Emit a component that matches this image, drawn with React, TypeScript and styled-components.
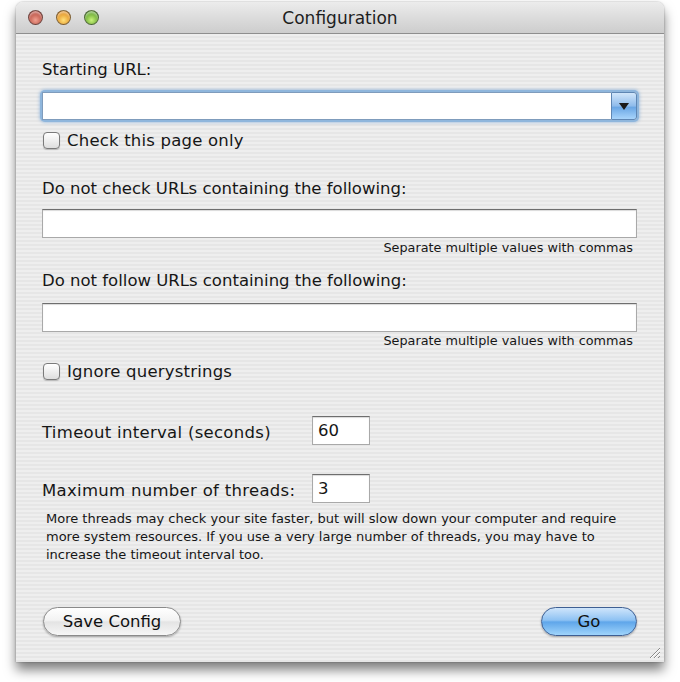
import * as React from "react";
import styled, { createGlobalStyle } from "styled-components";

const GlobalStyle = createGlobalStyle`
	html, body {
		margin: 0;
		padding: 0;
		background: #ffffff;
	}
	body {
		font-family: "DejaVu Sans", "Liberation Sans", sans-serif;
		color: #161616;
	}
`;

const StyledPage = styled.div`
	width: 680px;
	height: 682px;
	padding: 2px 16px 0;
	box-sizing: border-box;
`;

const StyledWindow = styled.div`
	width: 648px;
	height: 660px;
	border-radius: 7px 7px 0 0;
	overflow: hidden;
	display: flex;
	flex-direction: column;
	box-shadow: 0 8px 12px rgba(0, 0, 0, 0.5), 0 0 2px rgba(0, 0, 0, 0.35);
	background: repeating-linear-gradient(
		to bottom,
		#eeeeee 0px,
		#eeeeee 2px,
		#e6e6e6 2px,
		#e6e6e6 4px
	);
`;

const StyledTitleBar = styled.div`
	height: 31px;
	flex-shrink: 0;
	display: flex;
	align-items: center;
	position: relative;
	background: linear-gradient(to bottom, #ececec 0%, #dcdcdc 50%, #cdcdcd 100%);
	border-bottom: 1px solid #8e8e8e;
`;

const StyledLights = styled.div`
	display: flex;
	gap: 13px;
	padding-left: 12px;
`;

const StyledLight = styled.div<{ $c1: string; $c2: string }>`
	width: 15px;
	height: 15px;
	border-radius: 50%;
	box-sizing: border-box;
	border: 1px solid rgba(60, 60, 60, 0.6);
	background: radial-gradient(
		circle at 50% 70%,
		${(p) => p.$c1} 0%,
		${(p) => p.$c2} 75%
	);
	box-shadow: inset 0 2px 2px rgba(255, 255, 255, 0.5);
`;

const StyledTitle = styled.div`
	position: absolute;
	left: 0;
	right: 0;
	text-align: center;
	font-size: 17px;
	color: #1e1e1e;
	pointer-events: none;
`;

const StyledContent = styled.div`
	flex: 1;
	display: flex;
	flex-direction: column;
	padding: 26px 27px 0 26px;
	position: relative;
`;

const StyledLabel = styled.div<{ $mt: number }>`
	margin-top: ${(p) => p.$mt}px;
	height: 20px;
	line-height: 20px;
	font-size: 16.5px;
	white-space: nowrap;
`;

const StyledCombo = styled.div`
	margin-top: 12px;
	height: 28px;
	display: flex;
	box-sizing: border-box;
	border-radius: 3px;
	box-shadow: 0 0 0 2px #8fb6dc, 0 0 3px 3px rgba(120, 165, 215, 0.5);
`;

const StyledComboField = styled.div`
	flex: 1;
	background: #fff;
	border: 1px solid #7f9cbc;
	border-right: none;
`;

const StyledComboButton = styled.div`
	width: 24px;
	display: flex;
	align-items: center;
	justify-content: center;
	border-radius: 0 3px 3px 0;
	border: 1px solid #5f86b3;
	background: linear-gradient(to bottom, #d2e6fa 0%, #8ebbeb 50%, #6aa6e4 55%, #a8d4fb 100%);
`;

const StyledArrow = styled.div`
	width: 0;
	height: 0;
	border-left: 5px solid transparent;
	border-right: 5px solid transparent;
	border-top: 7px solid #1a1a1a;
`;

const StyledCheckRow = styled.div<{ $mt: number }>`
	margin-top: ${(p) => p.$mt}px;
	height: 20px;
	display: flex;
	align-items: center;
	gap: 7px;
	padding-left: 1px;
	font-size: 16.5px;
	letter-spacing: 0.2px;
`;

const StyledCheckbox = styled.div`
	width: 17px;
	height: 17px;
	box-sizing: border-box;
	border: 1px solid #7a7a7a;
	border-radius: 4px;
	background: linear-gradient(to bottom, #ffffff 0%, #efefef 50%, #dedede 100%);
	box-shadow: 0 1px 1px rgba(0, 0, 0, 0.2);
`;

const StyledField = styled.div<{ $mt: number; $w?: number }>`
	margin-top: ${(p) => p.$mt}px;
	height: 29px;
	width: ${(p) => (p.$w ? `${p.$w}px` : "auto")};
	box-sizing: border-box;
	background: #fff;
	border: 1px solid #a9a9a9;
	border-top-color: #6e6e6e;
	box-shadow: inset 0 1px 1px rgba(0, 0, 0, 0.15);
	display: flex;
	align-items: center;
	padding-left: 5px;
	font-size: 16.5px;
	flex-shrink: 0;
`;

const StyledHint = styled.div<{ $mt: number }>`
	margin-top: ${(p) => p.$mt}px;
	height: 14px;
	line-height: 14px;
	font-size: 12.8px;
	text-align: right;
	padding-right: 4px;
`;

const StyledFormRow = styled.div<{ $mt: number }>`
	margin-top: ${(p) => p.$mt}px;
	display: flex;
	align-items: center;
	font-size: 16.5px;
`;

const StyledRowLabel = styled.div`
	width: 270px;
	white-space: nowrap;
	padding-top: 3px;
	letter-spacing: 0.3px;
`;

const StyledNote = styled.p`
	margin: 7px 0 0;
	padding-left: 4px;
	font-size: 13px;
	line-height: 18px;
	white-space: nowrap;
`;

const StyledFooter = styled.div`
	margin-top: 43px;
	display: flex;
	justify-content: space-between;
`;

const StyledButton = styled.div<{ $primary?: boolean }>`
	height: 29px;
	width: ${(p) => (p.$primary ? "96px" : "138px")};
	box-sizing: border-box;
	border-radius: 15px;
	display: flex;
	align-items: center;
	justify-content: center;
	font-size: 16.5px;
	color: #111;
	margin-left: 1px;
	border: 1px solid ${(p) => (p.$primary ? "#3e5f93" : "#8a8a8a")};
	background: ${(p) =>
		p.$primary
			? "linear-gradient(to bottom, #cfe5fb 0%, #8ec2f3 45%, #5fa6ea 52%, #9fd4fb 100%)"
			: "linear-gradient(to bottom, #ffffff 0%, #f3f3f3 45%, #e4e4e4 52%, #f6f6f6 100%)"};
	box-shadow: 0 1px 2px rgba(0, 0, 0, 0.3);
`;

const StyledGrip = styled.svg`
	position: absolute;
	right: 3px;
	bottom: 3px;
`;

const App: React.FC = () => {
	return (
		<StyledPage>
			<GlobalStyle />
			<StyledWindow>
				<StyledTitleBar>
					<StyledLights>
						<StyledLight $c1="#f0a090" $c2="#b5473a" />
						<StyledLight $c1="#ffe07a" $c2="#e08a1a" />
						<StyledLight $c1="#c8f27a" $c2="#5a9e26" />
					</StyledLights>
					<StyledTitle>Configuration</StyledTitle>
				</StyledTitleBar>
				<StyledContent>
					<StyledLabel $mt={0}>Starting URL:</StyledLabel>
					<StyledCombo>
						<StyledComboField />
						<StyledComboButton>
							<StyledArrow />
						</StyledComboButton>
					</StyledCombo>
					<StyledCheckRow $mt={10}>
						<StyledCheckbox />
						<span>Check this page only</span>
					</StyledCheckRow>

					<StyledLabel $mt={29}>Do not check URLs containing the following:</StyledLabel>
					<StyledField $mt={10} />
					<StyledHint $mt={3}>Separate multiple values with commas</StyledHint>

					<StyledLabel $mt={16}>Do not follow URLs containing the following:</StyledLabel>
					<StyledField $mt={12} />
					<StyledHint $mt={2}>Separate multiple values with commas</StyledHint>

					<StyledCheckRow $mt={13}>
						<StyledCheckbox />
						<span>Ignore querystrings</span>
					</StyledCheckRow>

					<StyledFormRow $mt={35}>
						<StyledRowLabel>Timeout interval (seconds)</StyledRowLabel>
						<StyledField $mt={0} $w={58}>60</StyledField>
					</StyledFormRow>
					<StyledFormRow $mt={29}>
						<StyledRowLabel>Maximum number of threads:</StyledRowLabel>
						<StyledField $mt={0} $w={58}>3</StyledField>
					</StyledFormRow>

					<StyledNote>
						More threads may check your site faster, but will slow down your computer and require
						<br />
						more system resources. If you use a very large number of threads, you may have to
						<br />
						increase the timeout interval too.
					</StyledNote>

					<StyledFooter>
						<StyledButton>Save Config</StyledButton>
						<StyledButton $primary>Go</StyledButton>
					</StyledFooter>

					<StyledGrip width="13" height="13" viewBox="0 0 13 13">
						<path d="M12 2 L2 12 M12 6 L6 12 M12 10 L10 12" stroke="#8a8a8a" strokeWidth="1" />
						<path d="M12 3 L3 12 M12 7 L7 12" stroke="#ffffff" strokeWidth="1" />
					</StyledGrip>
				</StyledContent>
			</StyledWindow>
		</StyledPage>
	);
};

export default App;
